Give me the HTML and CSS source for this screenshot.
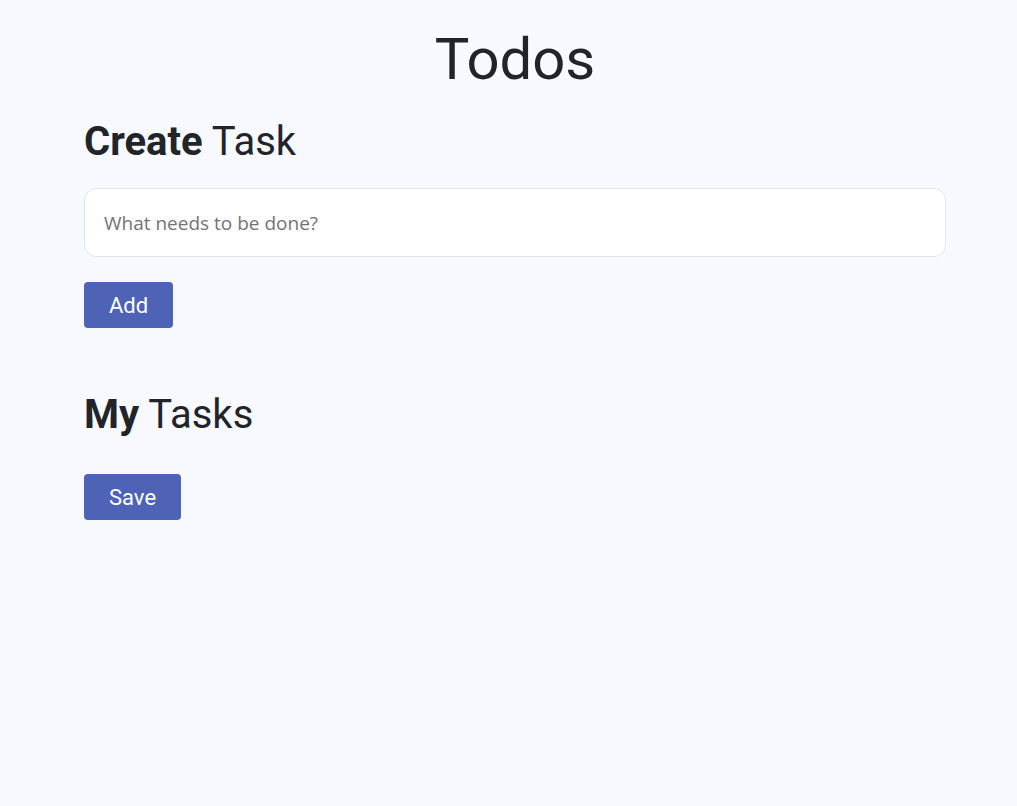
FILE: index.html
```html
<!DOCTYPE html>
<html>
<head>
<meta charset="utf-8">
<link rel="stylesheet" href="styles.css">
</head>
<body>
<main class="app">
  <h1 class="title">Todos</h1>
  <section class="create">
    <h2 class="heading"><strong>Create</strong> Task</h2>
    <input class="task-input" type="text" placeholder="What needs to be done?">
    <button class="btn">Add</button>
  </section>
  <section class="tasks">
    <h2 class="heading"><strong>My</strong> Tasks</h2>
    <button class="btn">Save</button>
  </section>
</main>
</body>
</html>
```
FILE: styles.css
```css
html, body {
  margin: 0;
  padding: 0;
  background: #f8f9fe;
}
body {
  font-family: Roboto, "Liberation Sans", sans-serif;
  color: #212529;
}
.app {
  width: 862px;
  margin: 0 0 0 84px;
  padding-top: 24px;
}
.title {
  margin: 0;
  text-align: center;
  font-weight: 400;
  font-size: 58px;
  line-height: 70px;
}
.heading {
  margin: 0;
  font-weight: 400;
  font-size: 40px;
  line-height: 48px;
}
.heading strong {
  font-weight: 700;
}
.create {
  margin-top: 24px;
  display: flex;
  flex-direction: column;
  align-items: flex-start;
}
.task-input {
  box-sizing: border-box;
  width: 100%;
  height: 69px;
  margin-top: 22px;
  padding: 0 19px;
  border: 1px solid #e2e4ea;
  border-radius: 12px;
  background: #fff;
  font-family: "Open Sans", sans-serif;
  font-size: 19px;
  color: #333;
  outline: none;
}
.task-input::placeholder {
  color: #737373;
}
.btn {
  margin-top: 25px;
  height: 46px;
  padding: 0 25px;
  border: none;
  border-radius: 4px;
  background: #4e63b5;
  color: #fff;
  font-family: Roboto, sans-serif;
  font-size: 22px;
  cursor: pointer;
}
.tasks {
  margin-top: 63px;
  display: flex;
  flex-direction: column;
  align-items: flex-start;
}
.tasks .btn {
  margin-top: 35px;
}
```
